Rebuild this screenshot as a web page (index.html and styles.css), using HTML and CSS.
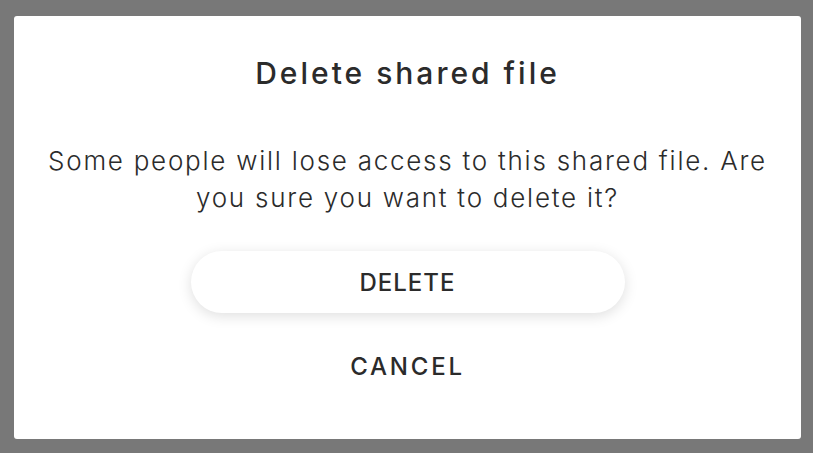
FILE: index.html
```html
<!DOCTYPE html>
<html>
<head>
<meta charset="utf-8">
<link rel="stylesheet" href="styles.css">
</head>
<body>
<div class="backdrop">
  <div class="dialog">
    <h1 class="title">Delete shared file</h1>
    <p class="message">Some people will lose access to this shared file. Are you sure you want to delete it?</p>
    <button class="btn btn-primary">DELETE</button>
    <button class="btn btn-text">CANCEL</button>
  </div>
</div>
</body>
</html>
```
FILE: styles.css
```css
html, body {
  margin: 0;
  padding: 0;
  background: #787878;
}
.backdrop {
  width: 813px;
  height: 453px;
  box-sizing: border-box;
  padding: 16px 12px 14px 14px;
}
.dialog {
  width: 787px;
  height: 423px;
  box-sizing: border-box;
  background: #fff;
  border-radius: 3px;
  display: flex;
  flex-direction: column;
  align-items: center;
  padding: 37px 30px 0;
  font-family: Inter, "Noto Sans", sans-serif;
  color: #2b2b2b;
}
.title {
  margin: 0;
  font-size: 30px;
  font-weight: 500;
  line-height: 40px;
  letter-spacing: 3px;
}
.message {
  margin: 49px 0 0;
  font-size: 26px;
  font-weight: 300;
  line-height: 37px;
  text-align: center;
  letter-spacing: 1.75px;
}
.btn {
  font-family: Inter, "Noto Sans", sans-serif;
  font-size: 24px;
  font-weight: 500;
  letter-spacing: 1px;
  color: #2b2b2b;
  border: none;
  background: #fff;
  cursor: pointer;
}
.btn-primary {
  margin-top: 35px;
  width: 434px;
  height: 62px;
  border-radius: 31px;
  box-shadow: 0 3px 14px rgba(0,0,0,0.13);
}
.btn-text {
  margin-top: 22px;
  height: 62px;
  padding: 0 20px;
  background: transparent;
  letter-spacing: 2.8px;
}
```
